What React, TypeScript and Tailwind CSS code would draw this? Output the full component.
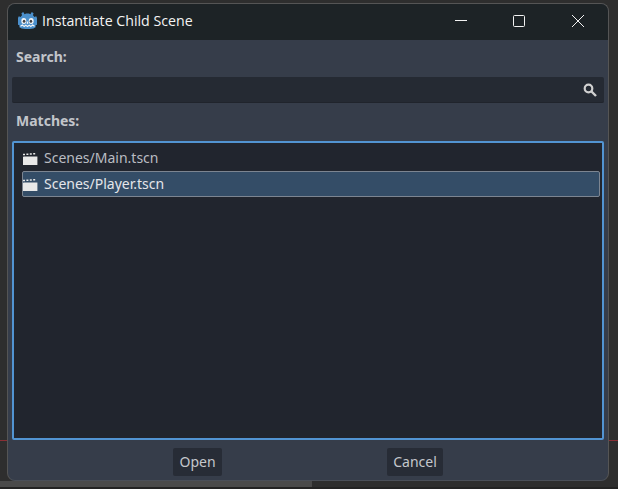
const godotPath =
  "M6.2 2.6 7.6 4.4C8.6 4 9.5 3.9 10.5 3.9 11.5 3.9 12.4 4 13.4 4.4L14.8 2.6 16.6 3.6 15.9 5.4C16.5 5.8 17 6.2 17.4 6.7L19.2 6.2 20 7.6V13.4L18.6 13.7V15.4L16.4 16.6 12.6 17H8.4L4.6 16.6 2.4 15.4V13.7L1 13.4V7.6L1.8 6.2 3.6 6.7C4 6.2 4.5 5.8 5.1 5.4L4.4 3.6Z";

function GodotLogo() {
  return (
    <svg width="21" height="20" viewBox="0 0 21 20" className="shrink-0">
      <g transform="translate(0 -2) scale(1 1.18)">
        <path d={godotPath} fill="#4b90cc" />
        <circle cx="6.8" cy="10.2" r="2.5" fill="#f2f4f6" />
        <circle cx="14.2" cy="10.2" r="2.5" fill="#f2f4f6" />
        <circle cx="7.1" cy="10.4" r="1.3" fill="#414042" />
        <circle cx="13.9" cy="10.4" r="1.3" fill="#414042" />
        <rect x="9.8" y="10.6" width="1.4" height="2" fill="#f2f4f6" />
        <path d="M3.4 14.6 5.4 13.6 7.2 14.8 8.8 13.8 10.5 14.8 12.2 13.8 13.8 14.8 15.6 13.6 17.6 14.6" fill="none" stroke="#f2f4f6" strokeWidth="1.1" />
      </g>
    </svg>
  );
}

function SceneIcon() {
  return (
    <svg width="16" height="16" viewBox="0 0 16 16" className="shrink-0">
      <path d="M0 8.1 0.6 7.5H14.4V16H0Z" fill="#e8e8e8" />
      <path d="M0 4.8h2v1.4H0zM3.4 4.6h2V6h-2zM6.8 4.3h2v1.4h-2zM10.2 4h2v1.4h-2z" fill="#e8e8e8" />
    </svg>
  );
}

function WindowButtons() {
  return (
    <div className="flex items-center gap-[46px] pr-[24px]">
      <svg width="12" height="12" viewBox="0 0 12 12">
        <path d="M0 5.5h12" stroke="#f2f2f2" strokeWidth="1" />
      </svg>
      <svg width="12" height="12" viewBox="0 0 12 12">
        <rect x="0.5" y="0.5" width="11" height="11" rx="1" fill="none" stroke="#f2f2f2" strokeWidth="1" />
      </svg>
      <svg width="12" height="12" viewBox="0 0 12 12" className="ml-px">
        <path d="M0 0l12 12M12 0 0 12" stroke="#f2f2f2" strokeWidth="1" />
      </svg>
    </div>
  );
}

function App() {
  return (
    <div className="relative w-[618px] h-[489px] overflow-hidden bg-[#2e2e2e] font-['Noto_Sans',sans-serif] text-[14px]">
      {/* editor behind the dialog */}
      <div className="absolute left-0 right-0 top-[440px] h-px bg-[#8a2f35]" />
      <div className="absolute left-0 top-[481px] w-[312px] h-[6px] bg-[#4a4a4a]" />
      <div className="absolute left-0 right-0 top-[487px] h-[2px] bg-[#232323]" />

      <div className="absolute left-[7px] top-[3px] w-[602px] h-[478px] flex flex-col rounded-[8px] overflow-hidden border border-[#555] border-b-[#4a4f58] bg-[#363d4a]">
        <div className="h-[36px] flex items-center justify-between bg-[#1d2326] pl-[9px] pb-[2px]">
          <div className="flex items-center gap-[4px]">
            <GodotLogo />
            <span className="font-['Open_Sans',sans-serif] text-[14.2px] text-[#f4f4f4]">Instantiate Child Scene</span>
          </div>
          <WindowButtons />
        </div>

        <div className="flex-1 flex flex-col px-[4px]">
          <div className="h-[37px] pl-[4px] pt-[7px] font-bold text-[#c2c5ca] leading-[20px]">Search:</div>
          <div className="h-[26px] flex items-center justify-end pr-[7px] rounded-[2px] bg-[#252a33] border-b border-[#20242c]">
            <svg width="14" height="14" viewBox="0 0 14 14">
              <circle cx="5.5" cy="5.5" r="3.8" fill="none" stroke="#d0d0d0" strokeWidth="2.2" />
              <path d="M8.5 8.5 13 13" stroke="#d0d0d0" strokeWidth="2.4" />
            </svg>
          </div>
          <div className="h-[38px] pl-[4px] pt-[8px] font-bold text-[#c2c5ca] leading-[20px]">Matches:</div>
          <div className="h-[299px] border-2 border-[#5294d2] rounded-[2px] bg-[#21252e] pl-[8px] pr-[2px] pt-[2px]">
            <div className="h-[26px] flex items-center gap-[5px] px-px pb-[2px] text-[#b9bcc2]">
              <SceneIcon />
              <span>Scenes/Main.tscn</span>
            </div>
            <div className="h-[26px] flex items-center gap-[5px] pb-[2px] text-[#e4e6ea] rounded-[2px] bg-[#344d67] border border-[#7c8591]">
              <SceneIcon />
              <span>Scenes/Player.tscn</span>
            </div>
          </div>
          <div className="flex-1 -mx-[4px] flex items-start justify-evenly pt-[8px]">
            <button className="w-[49px] h-[28px] pb-px rounded-[2px] bg-[#272c36] text-[#c4c7cc]">Open</button>
            <button className="w-[56px] h-[28px] pb-px rounded-[2px] bg-[#272c36] text-[#c4c7cc]">Cancel</button>
          </div>
        </div>
      </div>
    </div>
  );
}

export default App;
